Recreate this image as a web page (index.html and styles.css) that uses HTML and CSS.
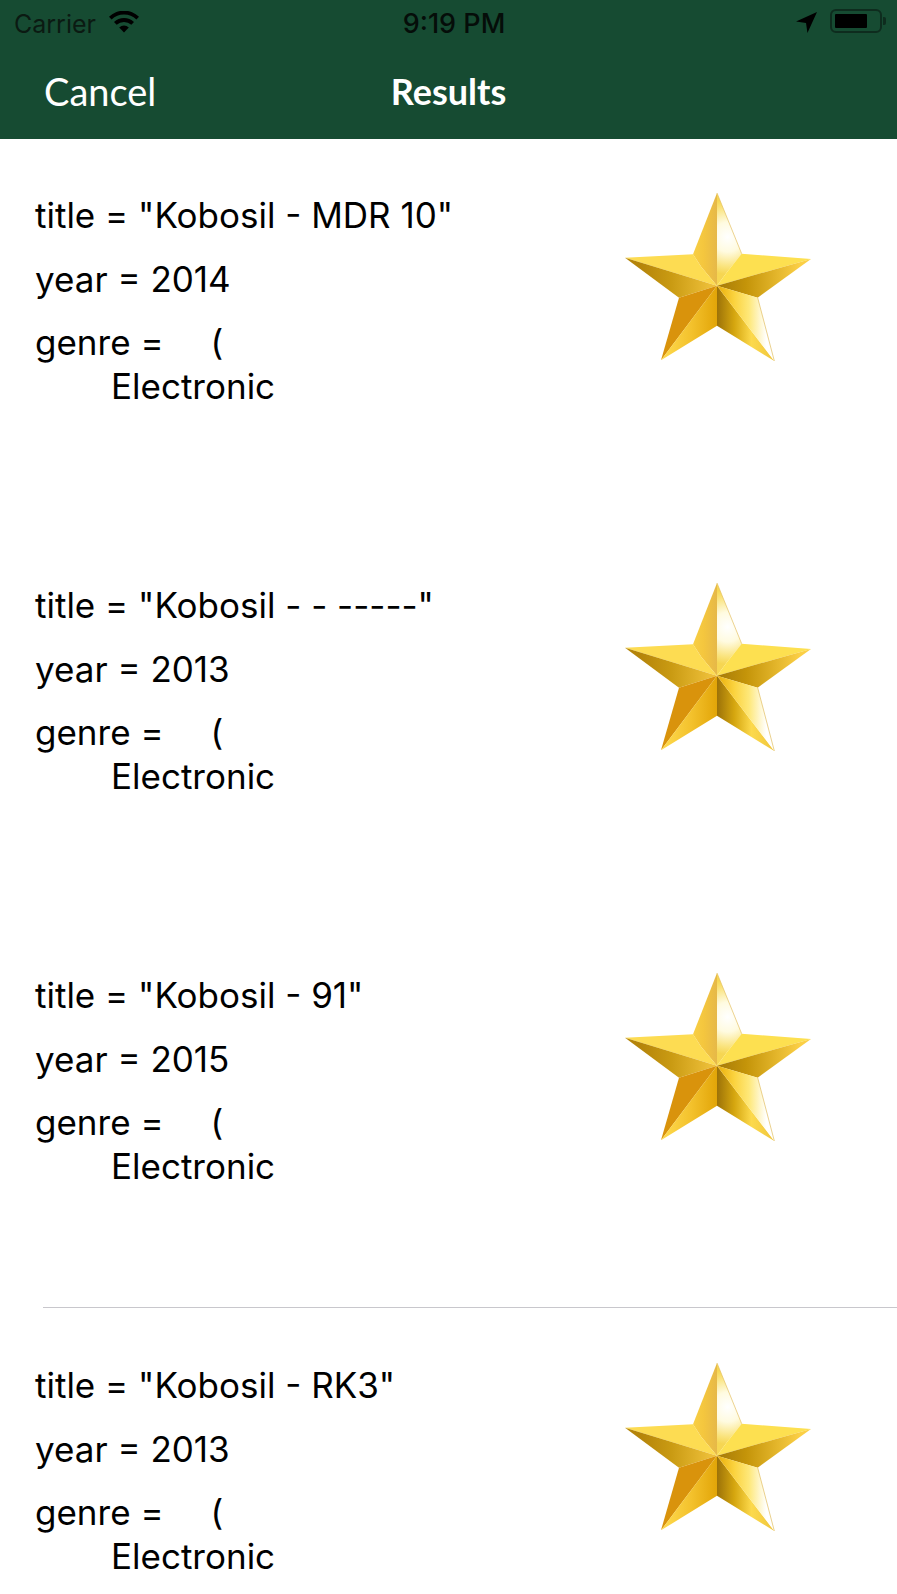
FILE: index.html
```html
<!DOCTYPE html>
<html lang="en">
<head>
<meta charset="UTF-8">
<meta name="viewport" content="width=device-width, initial-scale=1">
<title>Results</title>
<link rel="stylesheet" href="styles.css">
</head>
<body>

<!-- star artwork, reused by every row -->
<svg class="defs" width="0" height="0" aria-hidden="true">
    <defs>
        <linearGradient id="g-top-left" gradientUnits="userSpaceOnUse" x1="250" y1="0" x2="322" y2="0">
            <stop offset="0" stop-color="#f8cf45"/>
            <stop offset="0.45" stop-color="#f4c63e"/>
            <stop offset="1" stop-color="#e6b848"/>
        </linearGradient>
        <radialGradient id="g-top-right" gradientUnits="userSpaceOnUse" cx="354" cy="172" r="112">
            <stop offset="0" stop-color="#ffffff"/>
            <stop offset="0.4" stop-color="#fffbe0"/>
            <stop offset="0.8" stop-color="#fae37c"/>
            <stop offset="1" stop-color="#f6d652"/>
        </radialGradient>
        <linearGradient id="g-left" gradientUnits="userSpaceOnUse" x1="90" y1="0" x2="322" y2="0">
            <stop offset="0" stop-color="#b4840a"/>
            <stop offset="0.4" stop-color="#c99a12"/>
            <stop offset="1" stop-color="#f3c53f"/>
        </linearGradient>
        <linearGradient id="g-right" gradientUnits="userSpaceOnUse" x1="322" y1="0" x2="570" y2="0">
            <stop offset="0" stop-color="#a67a08"/>
            <stop offset="0.35" stop-color="#c49409"/>
            <stop offset="1" stop-color="#fbcf45"/>
        </linearGradient>
        <linearGradient id="g-low-left" gradientUnits="userSpaceOnUse" x1="170" y1="0" x2="322" y2="0">
            <stop offset="0" stop-color="#fdd74a"/>
            <stop offset="0.5" stop-color="#f3c12c"/>
            <stop offset="1" stop-color="#e2a508"/>
        </linearGradient>
        <linearGradient id="g-low-mid" gradientUnits="userSpaceOnUse" x1="322" y1="0" x2="494" y2="0">
            <stop offset="0" stop-color="#9c7208"/>
            <stop offset="0.3" stop-color="#d5a60f"/>
            <stop offset="0.6" stop-color="#fcd94c"/>
            <stop offset="1" stop-color="#f0c63c"/>
        </linearGradient>
        <linearGradient id="g-low-right" gradientUnits="userSpaceOnUse" x1="322" y1="0" x2="470" y2="0">
            <stop offset="0" stop-color="#e8ad08"/>
            <stop offset="0.35" stop-color="#fbd33f"/>
            <stop offset="0.65" stop-color="#fee87a"/>
            <stop offset="1" stop-color="#ffffff"/>
        </linearGradient>
        <symbol id="star" viewBox="46 40 558 504">
            <polygon points="322,40 250,224 275,262 322,318" fill="url(#g-top-left)"/>
            <polygon points="322,40 396,222 350,280 322,318" fill="url(#g-top-right)"/>
            <polygon points="396,222 350,280 322,318 604,238" fill="#fde050"/>
            <polygon points="46,234 250,224 275,262 322,318" fill="#fddc52"/>
            <polygon points="46,234 208,354 322,318" fill="url(#g-left)"/>
            <polygon points="604,238 444,354 322,318" fill="url(#g-right)"/>
            <polygon points="208,354 154,542 322,318" fill="#d9930c"/>
            <polygon points="154,542 322,438 322,318" fill="url(#g-low-left)"/>
            <polygon points="322,318 322,438 494,544" fill="url(#g-low-mid)"/>
            <polygon points="322,318 444,354 494,544" fill="url(#g-low-right)"/>
            <polyline points="322,40 396,222" fill="none" stroke="#e3bd5a" stroke-width="2"/>
            <polyline points="444,354 494,544" fill="none" stroke="#e0b955" stroke-width="2"/>
        </symbol>
    </defs>
</svg>

<header class="top-bar">
    <div class="status-bar">
        <div class="status-left">
            <span class="carrier">Carrier</span>
            <svg class="wifi" viewBox="0 0 30 22">
                <path d="M15 21.5 L10.2 16.4 A7 7 0 0 1 19.8 16.4 Z"/>
                <path d="M7.7 13.8 L5 11 A14.4 14.4 0 0 1 25 11 L22.3 13.8 A10.6 10.6 0 0 0 7.7 13.8 Z"/>
                <path d="M2.6 8.4 L0 5.7 A21.6 21.6 0 0 1 30 5.7 L27.4 8.4 A17.9 17.9 0 0 0 2.6 8.4 Z"/>
            </svg>
        </div>
        <span class="clock">9:19 PM</span>
        <div class="status-right">
            <svg class="arrow" viewBox="0 0 22 22">
                <polygon points="22,0 12,22 10.5,11.5 0,10"/>
            </svg>
            <div class="battery">
                <div class="battery-level"></div>
            </div>
            <div class="battery-tip"></div>
        </div>
    </div>
    <nav class="nav-bar">
        <span class="nav-cancel">Cancel</span>
        <span class="nav-title">Results</span>
    </nav>
</header>

<main class="result-list">
    <div class="result-row">
        <div class="result-text">
            <p>title = "Kobosil - MDR 10"</p>
            <p>year = 2014</p>
            <p>genre = <span class="paren">(</span><br><span class="genre-item">Electronic</span></p>
        </div>
        <svg class="star"><use href="#star"/></svg>
    </div>
    <div class="result-row">
        <div class="result-text">
            <p>title = "Kobosil - - -----"</p>
            <p>year = 2013</p>
            <p>genre = <span class="paren">(</span><br><span class="genre-item">Electronic</span></p>
        </div>
        <svg class="star"><use href="#star"/></svg>
    </div>
    <div class="result-row has-line">
        <div class="result-text">
            <p>title = "Kobosil - 91"</p>
            <p>year = 2015</p>
            <p>genre = <span class="paren">(</span><br><span class="genre-item">Electronic</span></p>
        </div>
        <svg class="star"><use href="#star"/></svg>
    </div>
    <div class="result-row">
        <div class="result-text">
            <p>title = "Kobosil - RK3"</p>
            <p>year = 2013</p>
            <p>genre = <span class="paren">(</span><br><span class="genre-item">Electronic</span></p>
        </div>
        <svg class="star"><use href="#star"/></svg>
    </div>
</main>

</body>
</html>
```

FILE: styles.css
```css
html, body {
    margin: 0;
    height: 100%;
    overflow: hidden;
}
body {
    background-color: #fff;
    font-family: Inter, "Liberation Sans", sans-serif;
    color: #000;
}
.defs {
    display: block;
    height: 0;
}

/* Top green area */
.top-bar {
    background-color: #164b32;
    height: 139px;
}
.status-bar {
    height: 47px;
    display: grid;
    grid-template-columns: 1fr auto 1fr;
    align-items: center;
    padding: 0 11px 0 14px;
    font-size: 25px;
}
.status-left {
    display: flex;
    align-items: center;
    gap: 13px;
}
.carrier {
    color: #0b1a12;
}
.wifi {
    width: 30px;
    height: 22px;
    fill: #000;
    margin-top: -4px;
}
.clock {
    font-size: 27px;
    font-weight: 500;
    color: #050d09;
    margin-left: 8px;
}
.status-right {
    display: flex;
    align-items: center;
    justify-content: flex-end;
}
.arrow {
    width: 21px;
    height: 21px;
    fill: #000;
    margin: -3px 13px 0 0;
}
.battery {
    width: 52px;
    height: 24px;
    box-sizing: border-box;
    border: 2px solid #0e2c1e;
    border-radius: 6px;
    padding: 3px;
    margin-top: -5px;
}
.battery-level {
    width: 32px;
    height: 100%;
    background-color: #000;
    border-radius: 1px;
}
.battery-tip {
    width: 3px;
    height: 8px;
    background-color: #0e2c1e;
    border-radius: 0 2px 2px 0;
    margin: -5px 0 0 1px;
}
.nav-bar {
    height: 88px;
    position: relative;
    display: flex;
    align-items: center;
    justify-content: center;
    color: #fff;
}
.nav-cancel {
    position: absolute;
    left: 44px;
    font-family: Lato, sans-serif;
    font-size: 38px;
}
.nav-title {
    font-family: Lato, sans-serif;
    font-weight: 700;
    font-size: 36px;
}

/* Rows */
.result-list {
    height: calc(100% - 139px);
    overflow: hidden;
}
.result-row {
    height: 390px;
    box-sizing: border-box;
    position: relative;
    display: flex;
    justify-content: space-between;
    align-items: flex-start;
    padding: 54px 86px 0 35px;
}
.result-row:last-child {
    height: auto;
}
.has-line::after {
    content: "";
    position: absolute;
    left: 43px;
    right: 0;
    bottom: 1px;
    height: 1px;
    background-color: #c8c7cc;
}
.result-text {
    font-size: 35px;
    line-height: 43.5px;
    padding-top: 1px;
}
.result-text p {
    margin: 0 0 20px;
}
.result-text p:last-child {
    margin-bottom: 0;
}
.paren {
    margin-left: 37px;
}
.genre-item {
    margin-left: 76px;
}
.star {
    width: 186px;
    height: 168px;
}
```
